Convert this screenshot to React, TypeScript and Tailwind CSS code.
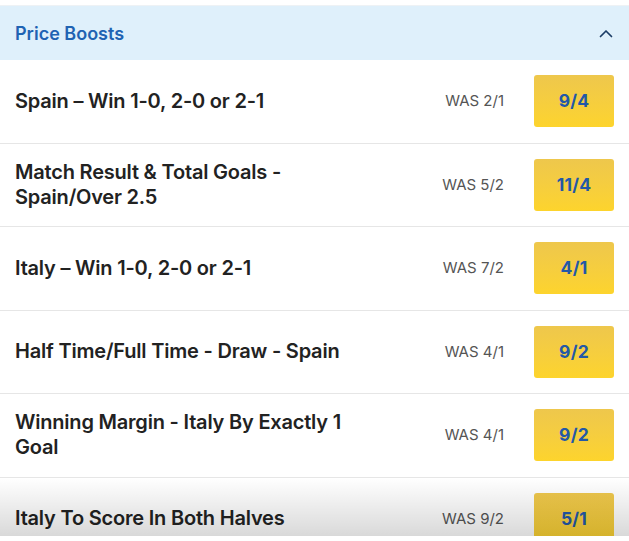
import React from "react";

const rows = [
  { title: "Spain – Win 1-0, 2-0 or 2-1", was: "WAS 2/1", price: "9/4" },
  { title: "Match Result & Total Goals - Spain/Over 2.5", was: "WAS 5/2", price: "11/4" },
  { title: "Italy – Win 1-0, 2-0 or 2-1", was: "WAS 7/2", price: "4/1" },
  { title: "Half Time/Full Time - Draw - Spain", was: "WAS 4/1", price: "9/2" },
  { title: "Winning Margin - Italy By Exactly 1 Goal", was: "WAS 4/1", price: "9/2" },
  { title: "Italy To Score In Both Halves", was: "WAS 9/2", price: "5/1" },
];

export default function App() {
  return (
    <div
      className="relative w-[629px] h-[541px] overflow-hidden bg-white"
      style={{ fontFamily: "Inter, 'Noto Sans', sans-serif" }}
    >
      <div className="h-[6px] bg-white border-b border-[#eef2f5]" />
      <div className="h-[54px] bg-[#dff0fb] flex items-center justify-between pl-[15px] pr-[16px]">
        <span className="text-[18px] font-semibold text-[#1f63b3]">Price Boosts</span>
        <svg width="14" height="9" viewBox="0 0 14 9" fill="none">
          <path d="M1.5 7.5 L7 2 L12.5 7.5" stroke="#1c3d66" strokeWidth="1.7" strokeLinecap="round" strokeLinejoin="round" />
        </svg>
      </div>
      <div className="flex flex-col">
        {rows.map((r, i) => (
          <div
            key={i}
            className="flex items-center pl-[15px] pr-[15px] py-[15.25px] border-b border-[#e6e6e6]"
          >
            <div className="flex-1 min-w-0">
              <div className="max-w-[360px] text-[20px] leading-[25px] font-semibold text-[#222222] tracking-[-0.2px]">
                {r.title}
              </div>
            </div>
            <div className="text-[15px] text-[#555555] whitespace-nowrap">{r.was}</div>
            <div className="ml-[30px] w-[80px] h-[52px] rounded-[3px] bg-gradient-to-b from-[#eec74c] to-[#fdd42c] flex items-center justify-center">
              <span className="text-[17.5px] font-bold text-[#2358a8] tracking-[0.2px]">{r.price}</span>
            </div>
          </div>
        ))}
      </div>
      <div className="absolute left-0 right-0 bottom-[5px] h-[58px] bg-gradient-to-b from-transparent to-black/15" />
      <div className="absolute left-0 right-0 bottom-0 h-[5px] bg-white" />
    </div>
  );
}
